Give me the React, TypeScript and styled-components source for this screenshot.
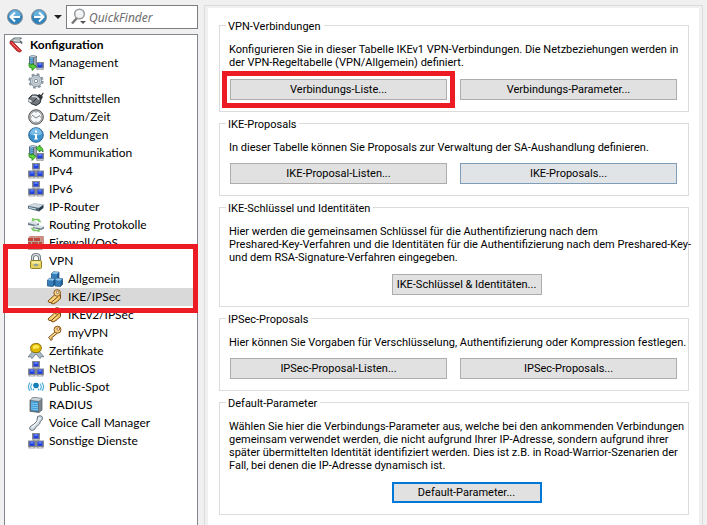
import React from "react";
import styled, { createGlobalStyle, css } from "styled-components";

const Global = createGlobalStyle`
  * { box-sizing: border-box; }
  body { margin: 0; background: #f0f0f0; color: #000; }
  ul { list-style: none; margin: 0; padding: 0; }
  button, input { font: inherit; color: inherit; }
`;

const Window = styled.div`
  display: grid;
  grid-template-columns: 194px minmax(0, 1fr);
  column-gap: 6px;
  min-height: 100vh;
  padding: 5px 4px 0;
  background: #f0f0f0;
  font-family: Lato, "Open Sans", sans-serif;
  font-size: 12px;
`;

const Sidebar = styled.div`
  display: flex;
  flex-direction: column;
  gap: 5px;
`;

const Toolbar = styled.div`
  display: flex;
  align-items: center;
  height: 24px;
  padding-left: 2px;
`;

const NavButton = styled.button`
  display: flex;
  width: 18px;
  height: 18px;
  margin-right: 6px;
  padding: 0;
  border: 0;
  background: none;
`;

const HistoryButton = styled.button`
  display: flex;
  justify-content: center;
  width: 8px;
  margin-right: 4px;
  padding: 0;
  border: 0;
  background: none;
`;

const Finder = styled.label`
  display: flex;
  align-items: center;
  gap: 2px;
  flex: 1;
  min-width: 0;
  height: 24px;
  padding-left: 4px;
  border: 1px solid #7a7d82;
  background: #fff;
`;

const FinderInput = styled.input`
  flex: 1;
  min-width: 0;
  padding: 0;
  border: 0;
  outline: 0;
  background: none;
  font-family: "Noto Sans", sans-serif;
  font-size: 12px;
  font-style: italic;
  &::placeholder { color: #6d6d6d; opacity: 1; }
`;

const Tree = styled.nav`
  flex: 1;
  padding-top: 1px;
  border: 1px solid #828790;
  border-bottom: 0;
  background: #fff;
`;

const TreeItem = styled.li`
  position: relative;
`;

const TreeLink = styled.a<{ $level: number; $selected?: boolean }>`
  display: flex;
  align-items: center;
  gap: 5px;
  height: 18px;
  padding-left: ${(p) => [4, 23, 42][p.$level]}px;
  background: ${(p) => (p.$selected ? "#d9d9d9" : "transparent")};
  color: #000;
  font-weight: ${(p) => (p.$level === 0 ? 700 : 400)};
  line-height: 18px;
  text-decoration: none;
  white-space: nowrap;
`;

const marker = css`
  position: absolute;
  z-index: 1;
  border: 5px solid #ed1c24;
  pointer-events: none;
`;

const TreeMarker = styled.span`
  ${marker}
  top: -8px;
  left: -2px;
  right: -1px;
  height: 69px;
`;

const ButtonMarker = styled.span`
  ${marker}
  inset: -8px;
`;

const Panel = styled.main`
  display: flex;
  padding: 2px 3px 0;
  border: 1px solid #dcdcdc;
  border-bottom: 0;
`;

const Page = styled.div`
  display: flex;
  flex: 1;
  min-width: 0;
  flex-direction: column;
  gap: 11px;
  padding: 17px 10px 10px 11px;
  background: #fff;
  font-family: Roboto, "Liberation Sans", sans-serif;
  font-size: 11px;
  line-height: 13px;
`;

const Group = styled.section`
  padding: 0 11px 11px 10px;
  border: 1px solid #dcdcdc;
`;

const GroupTitle = styled.h2`
  width: fit-content;
  height: 13px;
  margin: -7px 0 11px -4px;
  padding: 0 3px 0 2px;
  background: #fff;
  font-size: 11px;
  font-weight: 400;
  line-height: 15px;
`;

const Description = styled.p<{ $tight?: boolean }>`
  margin: 0 0 ${(p) => (p.$tight ? 9 : 10)}px -1px;
  white-space: pre;
`;

const ButtonRow = styled.div<{ $single: boolean }>`
  display: grid;
  grid-template-columns: ${(p) => (p.$single ? "150px" : "1fr 1fr")};
  column-gap: 13px;
  justify-content: ${(p) => (p.$single ? "center" : "stretch")};
  padding-left: ${(p) => (p.$single ? 26 : 0)}px;
`;

const ButtonCell = styled.div`
  position: relative;
  display: grid;
`;

const PushButton = styled.button<{ $state?: "hover" | "default" }>`
  height: 21px;
  padding: 0;
  border: ${(p) => (p.$state === "default" ? "2px solid #0078d7" : "1px solid #adadad")};
  background: #e1e1e1;
  white-space: nowrap;
  ${(p) => p.$state === "hover" && css`border-color: #7f9db9; background: #e1e4e7;`}
`;

const Svg = styled.svg`
  flex: none;
  display: block;
`;

const Pc = ({ x, y }: { x: number; y: number }) => (
  <g transform={`translate(${x} ${y})`}>
    <path d="M-.5 0h8v6.500h-8z" fill="#85898c" />
    <path d="M1 1h5v4.500H1z" fill="#2443dc" />
    <path d="M2 1h3v2H2z" fill="#5c80fa" />
    <path d="M0 6.500h7v1.500h-7z" fill="#a2a6a9" />
    <path d="M2 6.500h3v1H2z" fill="#d0d3d5" />
  </g>
);

const Server = () => (
  <g>
    <path d="M1 1.500 4 0l5 1v9l-3 2-5-1z" fill="#5b6f80" />
    <path d="M2 2l3 .6v8L2 10z" fill="#78bce8" />
    <path d="M2 4l3 .5M2 6l3 .5M2 8l3 .5" stroke="#3a7fae" />
    <path d="M6 3l2.500-1v7.500L6 11z" fill="#9aa7b1" />
    <path d="M1.500 1.500 4 .5l4.500.8-2.500 1z" fill="#c4d0d8" />
  </g>
);

const glyphs: Record<string, React.ReactNode> = {
  knife: (
    <g>
      <path d="M1.500 4.500 5.500 1.500h5.500l1.500-.5M2.500 5l9-.5 1.500 2" fill="none" stroke="#59656b" strokeWidth="1.800" />
      <path d="M2 4.200 6 1.700h5M4 5l7-.5" fill="none" stroke="#d5dde0" strokeWidth=".8" />
      <path d="M1 4.500Q2.500 3.500 4 5l8.500 8.500q-.3 1.800-2.500 1.500L8 14 1 6.500z" fill="#dc2929" stroke="#8d1c1c" strokeWidth=".7" />
      <path d="M2.500 5.500l8 8" stroke="#ff8585" />
    </g>
  ),
  management: (
    <g>
      <Server />
      <Pc x={8.500} y={7} />
      <path d="M1 8v3q0 2 3 2v2.500l4.500-4L4 8.500V10Q2 10 1 8z" fill="#59cf35" stroke="#23831b" strokeWidth=".8" />
    </g>
  ),
  gear: (
    <g>
      <circle cx="8" cy="8" r="6.200" fill="none" stroke="#8a97a2" strokeWidth="3" strokeDasharray="2.600 2.270" />
      <circle cx="8" cy="8" r="5.700" fill="#c6d0d8" stroke="#8795a0" />
      <circle cx="8" cy="8" r="3.600" fill="#e3e9ed" stroke="#9aa8b2" strokeWidth=".8" />
      <circle cx="8" cy="8" r="1.800" fill="#fff" stroke="#71808b" />
    </g>
  ),
  plug: (
    <g>
      <path d="M9 5l2-2 2 1 2-2.500.7.7L14 5l1 1-2 3z" fill="#30363a" />
      <path d="M1 7 4 4h5l4 4-1 4-4 2.500-5-2z" fill="#72797e" stroke="#272d31" />
      <path d="M4 5.500h4l3 3" fill="none" stroke="#cdd3d6" strokeWidth="1.500" />
      <path d="M0 7.500 4 9v3L0 10.500z" fill="#e4e9eb" stroke="#4e565b" strokeWidth=".7" />
      <path d="M5 11l4-4" stroke="#34393d" />
    </g>
  ),
  clock: (
    <g>
      <circle cx="8" cy="8" r="7.300" fill="#b8b8b8" stroke="#565656" />
      <circle cx="8" cy="8" r="5.800" fill="#f6f8fa" stroke="#8a8e92" strokeWidth=".7" />
      <path d="M4 6l4 3 4-2.500" fill="none" stroke="#7a8086" />
      <path d="M8 3v1M8 12v1M3 8h1M12 8h1" stroke="#999" />
    </g>
  ),
  info: (
    <g>
      <circle cx="8" cy="8" r="7.300" fill="#3d91cc" stroke="#2b6798" />
      <path d="M2 7a6 6 0 0 1 12 0q-6 3-12 0z" fill="#79bce6" />
      <path d="M7 3.500h2v2H7zM6 7h3v4.500h1v1H6v-1h1V8H6z" fill="#fff" />
    </g>
  ),
  communication: (
    <g>
      <Server />
      <Pc x={8.500} y={8} />
      <path d="M8 3.500 12 0v2q3 0 3 5-1-2-3-2v2z" fill="#5fd83b" stroke="#1f791b" strokeWidth=".8" />
      <path d="M1 8v3q0 2 3 2v2.500l4-4-4-3V10Q2 10 1 8z" fill="#5fd83b" stroke="#1f791b" strokeWidth=".8" />
    </g>
  ),
  network: (
    <g>
      <Pc x={4.500} y={0} />
      <Pc x={0.500} y={7.500} />
      <Pc x={8.500} y={7.500} />
    </g>
  ),
  router: (
    <g>
      <path d="M0 7 6 4.500l9.500 1.300L11 9z" fill="#d1dce2" stroke="#9aaab5" strokeWidth=".6" />
      <path d="M0 7l11 2v3.500L0 9.500z" fill="#52636f" />
      <path d="M11 9l4.500-3.200V9L11 12.500z" fill="#263d4e" />
      <path d="M1 8.500l7 1.500" stroke="#c5ebfc" />
    </g>
  ),
  routing: (
    <g>
      <path d="M4 4V2l1-1 1 1h5l2 3h-2L9 3H6v2zM12 11v2l-1 2-2-1H5l-2-3h2l2 2h3v-2z" fill="#85d96b" stroke="#66aa55" strokeWidth=".4" />
      <path d="M0 5l5-1 6 2-3 2-8-1z" fill="#d8e1e6" />
      <path d="M0 6l8 2 3-2v2L8 9.500 0 8z" fill="#6b7c88" />
      <path d="M5 9l5-1 6 1.500-3 2-8-1z" fill="#d8e1e6" />
      <path d="M5 10l8 1.500 3-2v2L13 13l-8-2z" fill="#6b7c88" />
    </g>
  ),
  firewall: (
    <g>
      <path d="M0 3l2-2h14v12l-2 2H0z" fill="#b7a49e" />
      <path d="M0 3h5v3H0zM6 3h6v3H6zM0 7h3v3H0zM4 7h6v3H4zM11 7h3v3h-3zM0 11h5v3H0zM6 11h6v3H6z" fill="#bd4a3d" />
      <path d="M2 1h5L6 2.500H1zM9 1h6l-1 1.500H8zM13 3.500l2-1V6l-2 1zM15 7l1-1v4l-1 1z" fill="#dc8172" />
    </g>
  ),
  lock: (
    <g>
      <path d="M4.500 8V5q0-3.500 3.500-3.500T11.500 5v3" fill="none" stroke="#626b72" strokeWidth="3" />
      <path d="M4.500 8V5q0-3.500 3.500-3.500T11.500 5v3" fill="none" stroke="#d6dde1" strokeWidth="1.300" />
      <rect x="2.500" y="7.500" width="11" height="8" rx="1" fill="#e5d15c" stroke="#91802b" />
      <path d="M4 8.500h8v2H4z" fill="#f8efa0" />
      <ellipse cx="8" cy="12" rx="2.500" ry="1.300" fill="#8fa2a4" />
    </g>
  ),
  cubes: (
    <g stroke="#194b78" strokeWidth=".7">
      {[[4.500, 0.500], [0.500, 7], [8, 7]].map(([x, y]) => (
        <g key={x} transform={`translate(${x} ${y})`}>
          <path d="M0 2l2-1.700 5.500.4v5.500L5.500 8.500 0 8z" fill="#377eb8" />
          <path d="M0 2l2-1.700 5.500.4-2 2z" fill="#8cc4ea" stroke="none" />
          <path d="M5.500 2.700 7.500.7v5.500L5.500 8.500z" fill="#245d91" stroke="none" />
        </g>
      ))}
    </g>
  ),
  key: (
    <g>
      <path d="M8 7 1.500 12.500l1 1 1.500 2 1.500-1.500-1-1.200 1.500-1L10 8.500" fill="#f5c76a" stroke="#7d4a12" />
      <circle cx="10.500" cy="4.700" r="3.500" fill="#f7d283" stroke="#8a541a" />
      <circle cx="11.300" cy="4" r="1.300" fill="#fff" stroke="#8a541a" strokeWidth=".8" />
      <path d="M3 12.500 8.500 8" stroke="#fff0b8" strokeWidth=".8" />
    </g>
  ),
  keys: (
    <g>
      <path d="M7 9 4 14l2 1 3-1.500 4.500-4V5" fill="#f0bd5b" stroke="#7d4a12" />
      <path d="M7.500 6 1 12l1 1.500 2.500-.2L11 7.500" fill="#f8d27b" stroke="#7d4a12" />
      <circle cx="10.200" cy="3.900" r="3.300" fill="#f9dc95" stroke="#8a541a" />
      <circle cx="10.700" cy="3.400" r="1.300" fill="#fff" stroke="#8a541a" strokeWidth=".8" />
      <path d="M6 13.500l5.500-4.500" stroke="#fff0b8" strokeWidth=".8" />
    </g>
  ),
  certificate: (
    <g>
      <path d="M5 8 0 14l3-.4 1 2L8 11l4 4.500 1-2 3 .4L11 8z" fill="#a9bac5" stroke="#667782" strokeWidth=".8" />
      <path d="M4 1.500 7 .5h3l2.500 1.500 1 3-1 3L10 9.500H6L3 8 2.500 4z" fill="#dfb900" stroke="#806500" strokeWidth=".8" />
      <path d="M5 3q3-2 6 0v2L5 6z" fill="#ffe858" />
    </g>
  ),
  hotspot: (
    <g fill="none" stroke="#54aedb" strokeWidth="1.200">
      <path d="M2 3.500Q-1 8 2 12M4 4.500Q1.500 8 4 11M14 3.500q3 4.500 0 8.500M12 4.500q2.500 3.500 0 6.500M6 9.500l-1 2M10 9.500l1 2" />
      <circle cx="8" cy="6.500" r="2.200" fill="#1684bf" stroke="#1278af" />
    </g>
  ),
  server: (
    <g>
      <path d="M2 3l3-2.500 9 .8V13l-3 2.500-9-1.200z" fill="#65737d" stroke="#46525b" strokeWidth=".7" />
      <path d="M2 3l3-2.300 9 .8L11 4z" fill="#ccd5da" />
      <path d="M3 4l7 .8v9.500L3 13.300z" fill="#3c9bd6" />
      <path d="M3 6l7 .8M3 8l7 .8M3 10l7 .8M3 12l7 .8" stroke="#8fd2f7" strokeWidth=".8" />
      <path d="M11 4l2.500-2v11L11 15z" fill="#7b868e" />
    </g>
  ),
  phone: (
    <g>
      <path d="M9.500 1.500q3-1.500 4.500 0 1 2 0 3.500l-1.500 1.200-1 2.800-4 3.500-.5 1.500q-2 2-4.500 1-1.500-1.500-.5-3l1.500-1.500L5.500 9.500 9 6z" fill="#d3dde4" stroke="#65727d" />
      <path d="M11.500 3Q9.500 8.500 4 12" fill="none" stroke="#fff" />
    </g>
  ),
};

const Icon = ({ name }: { name: string }) => (
  <Svg width="16" height="16" viewBox="0 0 16 16" fill="none" aria-hidden="true">{glyphs[name]}</Svg>
);

const Arrow = ({ flip }: { flip?: boolean }) => (
  <Svg width="18" height="18" viewBox="0 0 18 18" aria-hidden="true">
    <circle cx="9" cy="9" r="7.500" fill="#2f83bd" stroke="#8a9298" />
    <path d="M3 8a6 6 0 0 1 12 0z" fill="#65afdc" />
    <g transform={flip ? "matrix(-1 0 0 1 18 0)" : undefined} fill="none" stroke="#fff" strokeWidth="2">
      <path d="M14 9H5M9 4.500 4.500 9 9 13.500" />
    </g>
  </Svg>
);

const items: { label: string; icon: string; level: number }[] = [
  { label: "Konfiguration", icon: "knife", level: 0 },
  { label: "Management", icon: "management", level: 1 },
  { label: "IoT", icon: "gear", level: 1 },
  { label: "Schnittstellen", icon: "plug", level: 1 },
  { label: "Datum/Zeit", icon: "clock", level: 1 },
  { label: "Meldungen", icon: "info", level: 1 },
  { label: "Kommunikation", icon: "communication", level: 1 },
  { label: "IPv4", icon: "network", level: 1 },
  { label: "IPv6", icon: "network", level: 1 },
  { label: "IP-Router", icon: "router", level: 1 },
  { label: "Routing Protokolle", icon: "routing", level: 1 },
  { label: "Firewall/QoS", icon: "firewall", level: 1 },
  { label: "VPN", icon: "lock", level: 1 },
  { label: "Allgemein", icon: "cubes", level: 2 },
  { label: "IKE/IPSec", icon: "keys", level: 2 },
  { label: "IKEv2/IPSec", icon: "keys", level: 2 },
  { label: "myVPN", icon: "key", level: 2 },
  { label: "Zertifikate", icon: "certificate", level: 1 },
  { label: "NetBIOS", icon: "network", level: 1 },
  { label: "Public-Spot", icon: "hotspot", level: 1 },
  { label: "RADIUS", icon: "server", level: 1 },
  { label: "Voice Call Manager", icon: "phone", level: 1 },
  { label: "Sonstige Dienste", icon: "network", level: 1 },
];

type Action = { label: string; state?: "hover" | "default"; marked?: boolean };

const groups: { title: string; lines: string[]; actions: Action[] }[] = [
  {
    title: "VPN-Verbindungen",
    lines: [
      "Konfigurieren Sie in dieser Tabelle IKEv1 VPN-Verbindungen. Die Netzbeziehungen werden in",
      "der VPN-Regeltabelle (VPN/Allgemein) definiert.",
    ],
    actions: [{ label: "Verbindungs-Liste...", marked: true }, { label: "Verbindungs-Parameter..." }],
  },
  {
    title: "IKE-Proposals",
    lines: ["In dieser Tabelle können Sie Proposals zur Verwaltung der SA-Aushandlung definieren."],
    actions: [{ label: "IKE-Proposal-Listen..." }, { label: "IKE-Proposals...", state: "hover" }],
  },
  {
    title: "IKE-Schlüssel und Identitäten",
    lines: [
      "Hier werden die gemeinsamen Schlüssel für die Authentifizierung nach dem",
      "Preshared-Key-Verfahren und die Identitäten für die Authentifizierung nach dem Preshared-Key-",
      "und dem RSA-Signature-Verfahren eingegeben.",
    ],
    actions: [{ label: "IKE-Schlüssel & Identitäten..." }],
  },
  {
    title: "IPSec-Proposals",
    lines: ["Hier können Sie Vorgaben für Verschlüsselung, Authentifizierung oder Kompression festlegen."],
    actions: [{ label: "IPSec-Proposal-Listen..." }, { label: "IPSec-Proposals..." }],
  },
  {
    title: "Default-Parameter",
    lines: [
      "Wählen Sie hier die Verbindungs-Parameter aus, welche bei den ankommenden Verbindungen",
      "gemeinsam verwendet werden, die nicht aufgrund Ihrer IP-Adresse, sondern aufgrund ihrer",
      "später übermittelten Identität identifiziert werden. Dies ist z.B. in Road-Warrior-Szenarien der",
      "Fall, bei denen die IP-Adresse dynamisch ist.",
    ],
    actions: [{ label: "Default-Parameter...", state: "default" }],
  },
];

export default function App() {
  return (
    <>
      <Global />
      <Window>
        <Sidebar>
          <Toolbar>
            <NavButton type="button" aria-label="Zurück"><Arrow /></NavButton>
            <NavButton type="button" aria-label="Vorwärts"><Arrow flip /></NavButton>
            <HistoryButton type="button" aria-label="Verlauf">
              <Svg width="8" height="4" viewBox="0 0 8 4"><path d="M0 0h8L4 4z" fill="#222" /></Svg>
            </HistoryButton>
            <Finder>
              <Svg width="16" height="18" viewBox="0 0 16 18" aria-hidden="true">
                <path d="M6 10 1 15.500" stroke="#777" strokeWidth="2.500" />
                <circle cx="8.500" cy="6" r="4.800" fill="#f1f4f6" stroke="#999" strokeWidth="1.500" />
                <path d="M6 5q1-2 3-2" fill="none" stroke="#fff" strokeWidth="1.500" />
                <path d="M9 13h6l-3 3z" fill="#555" />
              </Svg>
              <FinderInput placeholder="QuickFinder" aria-label="QuickFinder" />
            </Finder>
          </Toolbar>
          <Tree aria-label="Konfiguration">
            <ul>
              {items.map((item) => (
                <TreeItem key={item.label}>
                  <TreeLink
                    href="#"
                    $level={item.level}
                    $selected={item.label === "IKE/IPSec"}
                    aria-current={item.label === "IKE/IPSec" ? "page" : undefined}
                  >
                    <Icon name={item.icon} />
                    {item.label}
                  </TreeLink>
                  {item.label === "VPN" && <TreeMarker />}
                </TreeItem>
              ))}
            </ul>
          </Tree>
        </Sidebar>
        <Panel>
          <Page>
            {groups.map((group) => (
              <Group key={group.title}>
                <GroupTitle>{group.title}</GroupTitle>
                <Description $tight={group.lines.length === 1}>{group.lines.join("\n")}</Description>
                <ButtonRow $single={group.actions.length === 1}>
                  {group.actions.map((action) => (
                    <ButtonCell key={action.label}>
                      <PushButton type="button" $state={action.state}>{action.label}</PushButton>
                      {action.marked && <ButtonMarker />}
                    </ButtonCell>
                  ))}
                </ButtonRow>
              </Group>
            ))}
          </Page>
        </Panel>
      </Window>
    </>
  );
}
